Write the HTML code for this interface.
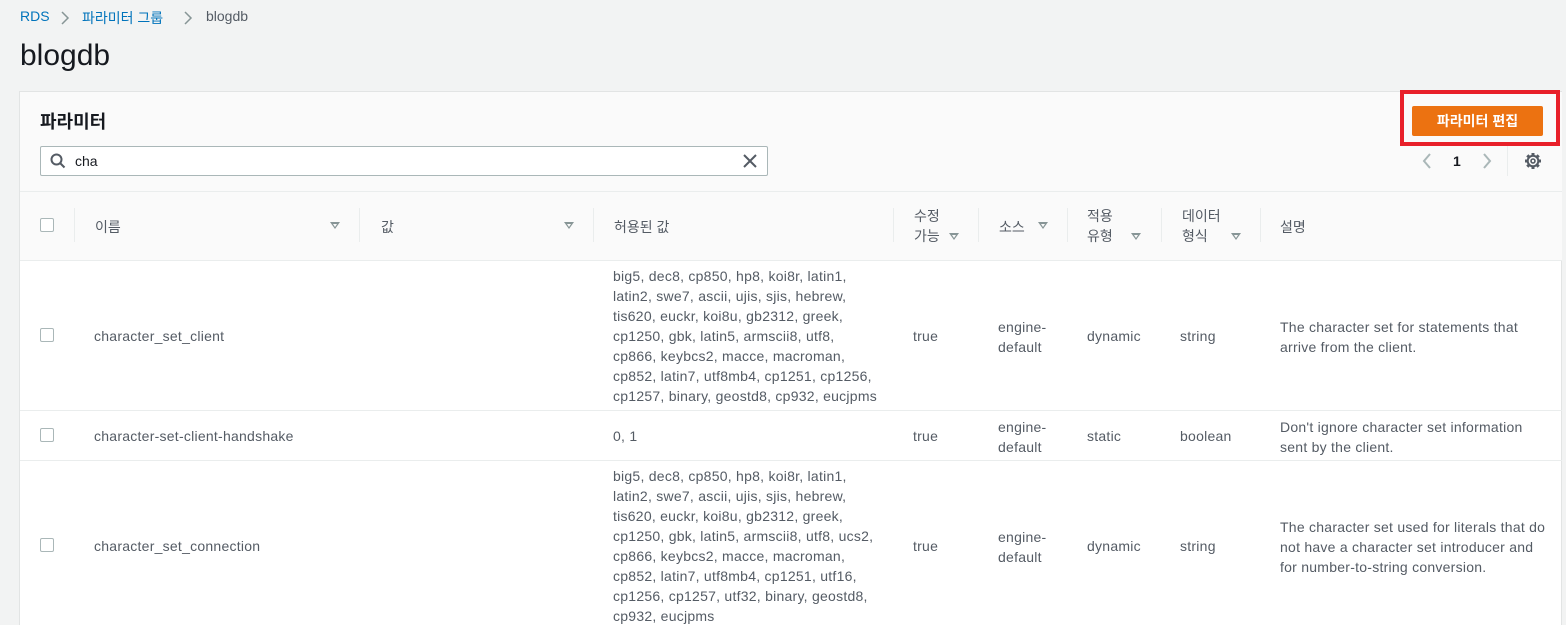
<!DOCTYPE html>
<html><head><meta charset="utf-8"><style>
*{margin:0;padding:0;box-sizing:border-box}
html,body{width:1566px;height:625px;overflow:hidden}
body{background:#f2f3f3;font-family:"Liberation Sans","Noto Sans CJK KR",sans-serif;font-size:14px;color:#545b64;position:relative}
.a{position:absolute;white-space:nowrap}
.bc{top:8px;font-size:14px}
.panel{position:absolute;left:19px;top:91px;width:1543px;height:534px;background:#fff;border:1px solid #e2e4e4;border-bottom:none}
.cb{position:absolute;width:14px;height:14px;border:1px solid #aab7b8;border-radius:2px;background:#fff}
.dv{position:absolute;width:1px;height:34px;background:#eaeded;top:208px}
.tri{position:absolute;width:0;height:0;border-left:5px solid transparent;border-right:5px solid transparent;border-top:7px solid #879596}
.tri:after{content:"";position:absolute;left:-2px;top:-5px;border-left:2px solid transparent;border-right:2px solid transparent;border-top:3px solid #fafafa}
.hl{position:absolute;left:20px;width:1542px;height:1px;background:#eaeded}
.t{line-height:20px}
.w{letter-spacing:.25px}
</style></head><body>
<div class="a bc" style="left:20px;color:#0073bb">RDS</div>
<svg class="a" style="left:60px;top:11px" width="10" height="14"><path d="M2 1l6 6-6 6" stroke="#879596" stroke-width="1.5" fill="none"/></svg>
<div class="a bc" style="left:82px;color:#0073bb">파라미터 그룹</div>
<svg class="a" style="left:183px;top:11px" width="10" height="14"><path d="M2 1l6 6-6 6" stroke="#879596" stroke-width="1.5" fill="none"/></svg>
<div class="a bc" style="left:206px;color:#545b64">blogdb</div>
<div class="a" style="left:20px;top:39px;font-size:30px;color:#16191f">blogdb</div>

<div class="panel"></div>
<div class="a" style="left:20px;top:92px;width:1542px;height:168px;background:#fafafa"></div>
<div class="hl" style="top:191px"></div>
<div class="a" style="left:40px;top:108px;font-size:18px;font-weight:bold;color:#16191f">파라미터</div>

<div class="a" style="left:40px;top:146px;width:728px;height:30px;border:1px solid #aab7b8;border-radius:2px;background:#fff"></div>
<svg class="a" style="left:50px;top:153px" width="16" height="16"><circle cx="6.5" cy="6.5" r="5" stroke="#545b64" stroke-width="2" fill="none"/><path d="M10 10l4.5 4.5" stroke="#545b64" stroke-width="2"/></svg>
<div class="a" style="left:75px;top:153px;color:#16191f">cha</div>
<svg class="a" style="left:742px;top:153px" width="16" height="16"><path d="M2 2l12 12M14 2L2 14" stroke="#545b64" stroke-width="2"/></svg>

<div class="a" style="left:1400px;top:90px;width:160px;height:56px;border:4px solid #e8202a"></div>
<div class="a" style="left:1412px;top:106px;width:131px;height:30px;background:#ec7211;border-radius:2px;color:#fff;font-weight:bold;font-size:14px;text-align:center;line-height:30px">파라미터 편집</div>

<svg class="a" style="left:1421px;top:152px" width="12" height="18"><path d="M9 2L3 9l6 7" stroke="#aab7b8" stroke-width="2" fill="none"/></svg>
<div class="a" style="left:1453px;top:153px;color:#16191f;font-weight:bold">1</div>
<svg class="a" style="left:1481px;top:152px" width="12" height="18"><path d="M3 2l6 7-6 7" stroke="#aab7b8" stroke-width="2" fill="none"/></svg>
<div class="a" style="left:1507px;top:146px;width:1px;height:30px;background:#eaeded"></div>
<svg class="a" style="left:1524px;top:152px" width="18" height="18" viewBox="0 0 18 18"><g stroke="#545b64" stroke-width="3" stroke-linecap="butt"><path d="M9 1v3M9 14v3M1 9h3M14 9h3M3.3 3.3l2.1 2.1M12.6 12.6l2.1 2.1M3.3 14.7l2.1-2.1M12.6 5.4l2.1-2.1"/></g><circle cx="9" cy="9" r="5.3" fill="#fafafa" stroke="#545b64" stroke-width="2"/><circle cx="9" cy="9" r="2" fill="none" stroke="#545b64" stroke-width="1.6"/></svg>

<!-- header -->
<div class="cb" style="left:40px;top:218px"></div>
<div class="dv" style="left:74px"></div>
<div class="a" style="left:95px;top:217px">이름</div><div class="tri" style="left:330px;top:222px"></div>
<div class="dv" style="left:359px"></div>
<div class="a" style="left:381px;top:217px">값</div><div class="tri" style="left:564px;top:222px"></div>
<div class="dv" style="left:593px"></div>
<div class="a" style="left:614px;top:217px">허용된 값</div>
<div class="dv" style="left:893px"></div>
<div class="a t" style="left:914px;top:206px">수정<br>가능</div><div class="tri" style="left:949px;top:233px"></div>
<div class="dv" style="left:978px"></div>
<div class="a" style="left:999px;top:217px">소스</div><div class="tri" style="left:1038px;top:222px"></div>
<div class="dv" style="left:1067px"></div>
<div class="a t" style="left:1087px;top:206px">적용<br>유형</div><div class="tri" style="left:1131px;top:233px"></div>
<div class="dv" style="left:1161px"></div>
<div class="a t" style="left:1182px;top:206px">데이터<br>형식</div><div class="tri" style="left:1231px;top:233px"></div>
<div class="dv" style="left:1260px"></div>
<div class="a" style="left:1280px;top:217px">설명</div>
<div class="hl" style="top:260px"></div>

<!-- row1 -->
<div class="cb" style="left:40px;top:328px"></div>
<div class="a w" style="left:94px;top:328px">character_set_client</div>
<div class="a t w" style="left:613px;top:266px">big5, dec8, cp850, hp8, koi8r, latin1,<br>latin2, swe7, ascii, ujis, sjis, hebrew,<br>tis620, euckr, koi8u, gb2312, greek,<br>cp1250, gbk, latin5, armscii8, utf8,<br>cp866, keybcs2, macce, macroman,<br>cp852, latin7, utf8mb4, cp1251, cp1256,<br>cp1257, binary, geostd8, cp932, eucjpms</div>
<div class="a w" style="left:913px;top:328px">true</div>
<div class="a t w" style="left:998px;top:317px">engine-<br>default</div>
<div class="a w" style="left:1087px;top:328px">dynamic</div>
<div class="a w" style="left:1180px;top:328px">string</div>
<div class="a t w" style="left:1280px;top:317px">The character set for statements that<br>arrive from the client.</div>
<div class="hl" style="top:410px"></div>

<!-- row2 -->
<div class="cb" style="left:40px;top:428px"></div>
<div class="a w" style="left:94px;top:428px">character-set-client-handshake</div>
<div class="a w" style="left:613px;top:428px">0, 1</div>
<div class="a w" style="left:913px;top:428px">true</div>
<div class="a t w" style="left:998px;top:417px">engine-<br>default</div>
<div class="a w" style="left:1087px;top:428px">static</div>
<div class="a w" style="left:1180px;top:428px">boolean</div>
<div class="a t w" style="left:1280px;top:417px">Don't ignore character set information<br>sent by the client.</div>
<div class="hl" style="top:460px"></div>

<!-- row3 -->
<div class="cb" style="left:40px;top:538px"></div>
<div class="a w" style="left:94px;top:538px">character_set_connection</div>
<div class="a t w" style="left:613px;top:466px">big5, dec8, cp850, hp8, koi8r, latin1,<br>latin2, swe7, ascii, ujis, sjis, hebrew,<br>tis620, euckr, koi8u, gb2312, greek,<br>cp1250, gbk, latin5, armscii8, utf8, ucs2,<br>cp866, keybcs2, macce, macroman,<br>cp852, latin7, utf8mb4, cp1251, utf16,<br>cp1256, cp1257, utf32, binary, geostd8,<br>cp932, eucjpms</div>
<div class="a w" style="left:913px;top:538px">true</div>
<div class="a t w" style="left:998px;top:527px">engine-<br>default</div>
<div class="a w" style="left:1087px;top:538px">dynamic</div>
<div class="a w" style="left:1180px;top:538px">string</div>
<div class="a t w" style="left:1280px;top:517px">The character set used for literals that do<br>not have a character set introducer and<br>for number-to-string conversion.</div>
</body></html>
